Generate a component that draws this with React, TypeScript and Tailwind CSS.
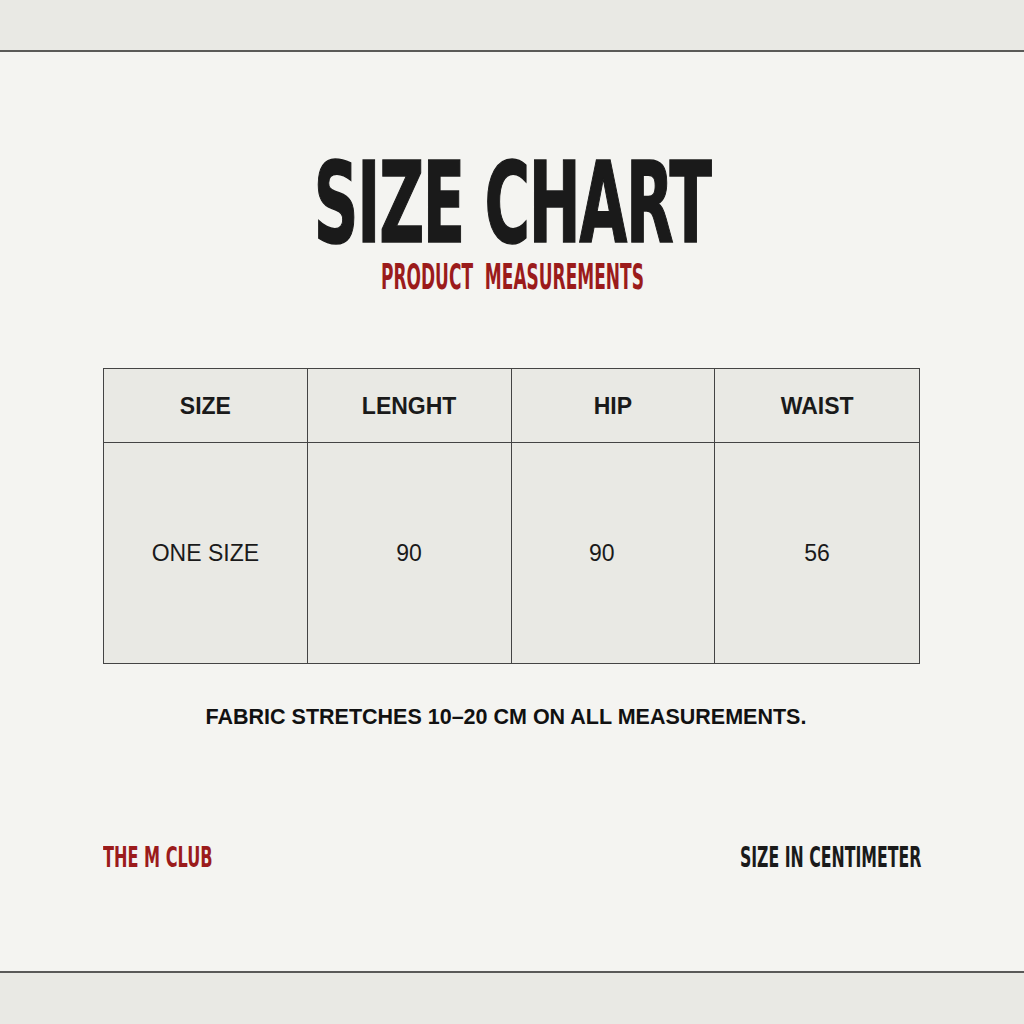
import React from "react";

const cond = { fontFamily: '"Liberation Sans Narrow", "DejaVu Sans Condensed", "Liberation Sans", sans-serif' };

export default function App() {
  const headers = ["SIZE", "LENGHT", "HIP", "WAIST"];
  const values = ["ONE SIZE", "90", "90", "56"];
  return (
    <div className="w-[1024px] h-[1024px] bg-[#f4f4f1] flex flex-col overflow-hidden" style={{ fontFamily: '"Liberation Sans", Arial, sans-serif' }}>
      <div className="h-[52px] bg-[#e9e9e4] border-b-2 border-[#5a5a58] shrink-0" />
      <div className="flex-1 flex flex-col">
        <div className="flex flex-col items-center pt-[106px]">
          <div className="text-[#1a1a1a] font-bold leading-[0.8] text-[113px] tracking-[-2px] scale-x-[0.61] whitespace-nowrap [-webkit-text-stroke:1.5px_#1a1a1a]" style={cond}>
            SIZE CHART
          </div>
          <div className="mt-[15px] text-[#9b1b1b] font-bold leading-[0.8] text-[35px] scale-x-[0.54] whitespace-nowrap" style={cond}>
            PRODUCT&nbsp;&nbsp;MEASUREMENTS
          </div>
        </div>
        <div className="mt-[77px] mx-[103px] w-[817px] border border-[#444] bg-[#e9e9e4] grid grid-cols-4">
          {headers.map((h, i) => (
            <div key={h} className={`h-[74px] flex items-center justify-center border-b border-[#444] font-bold text-[23px] text-[#1a1a1a] ${i < 3 ? "border-r" : ""}`}>
              {h}
            </div>
          ))}
          {values.map((v, i) => (
            <div key={i} className={`h-[220px] flex items-center justify-center text-[23px] text-[#1a1a1a] border-[#444] ${i < 3 ? "border-r" : ""} ${i === 2 ? "pr-[22px]" : ""}`}>
              {v}
            </div>
          ))}
        </div>
        <div className="mt-[37px] text-center font-bold text-[21.5px] text-[#111] ml-[-12px]">
          FABRIC STRETCHES 10–20 CM ON ALL MEASUREMENTS.
        </div>
        <div className="mt-[110px] mx-[103px] flex justify-between items-center">
          <div className="text-[#9b1b1b] font-bold text-[28px] leading-none scale-x-[0.64] origin-left whitespace-nowrap" style={cond}>
            THE M CLUB
          </div>
          <div className="text-[#1a1a1a] font-bold text-[28px] leading-none scale-x-[0.625] origin-right whitespace-nowrap" style={cond}>
            SIZE IN CENTIMETER
          </div>
        </div>
      </div>
      <div className="h-[53px] bg-[#e9e9e4] border-t-2 border-[#5a5a58] shrink-0" />
    </div>
  );
}
